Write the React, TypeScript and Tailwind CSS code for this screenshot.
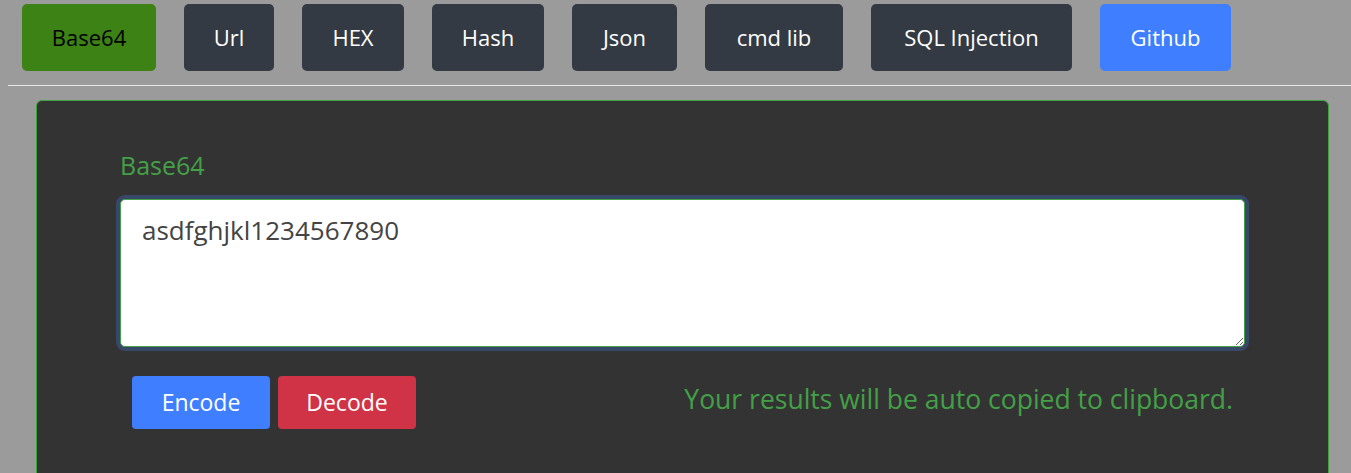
import React from "react";

const navItems = [
  { label: "Base64", w: "w-[134px]", cls: "bg-[#3d8215] text-black" },
  { label: "Url", w: "w-[90px]", cls: "bg-[#343a43] text-white" },
  { label: "HEX", w: "w-[102px]", cls: "bg-[#343a43] text-white" },
  { label: "Hash", w: "w-[112px]", cls: "bg-[#343a43] text-white" },
  { label: "Json", w: "w-[105px]", cls: "bg-[#343a43] text-white" },
  { label: "cmd lib", w: "w-[138px]", cls: "bg-[#343a43] text-white" },
  { label: "SQL Injection", w: "w-[201px]", cls: "bg-[#343a43] text-white" },
  { label: "Github", w: "w-[131px]", cls: "bg-[#3f7fff] text-white" },
];

const App = () => {
  return (
    <div
      className="h-[473px] w-full overflow-hidden bg-[#9b9b9b]"
      style={{ fontFamily: '"Open Sans", "Noto Sans", sans-serif' }}
    >
      <nav className="flex gap-[28px] pl-[22px] pt-[4px]">
        {navItems.map((item) => (
          <button
            key={item.label}
            className={`flex h-[67px] shrink-0 items-center justify-center rounded-[5px] text-[22px] ${item.w} ${item.cls}`}
          >
            {item.label}
          </button>
        ))}
      </nav>

      <hr className="ml-[8px] mt-[14px] border-t border-[#e6e6e6]" />

      <div className="ml-[36px] mr-[22px] mt-[14px] h-[400px] rounded-[6px] border border-[#3fa33f] bg-[#333333] px-[83px] pt-[46px]">
        <label className="block text-[25px] leading-[36px] text-[#43a047]">
          Base64
        </label>
        <textarea
          className="mt-[16px] block h-[148px] w-full resize-y rounded-[5px] border border-[#43a047] bg-white px-[21px] py-[12px] text-[26px] leading-[36px] text-[#444] shadow-[0_0_0_4px_#384869] outline-none"
          defaultValue="asdfghjkl1234567890"
        />
        <div className="mt-[29px] flex items-center justify-between pl-[12px] pr-[12px]">
          <div className="flex gap-[8px]">
            <button className="flex h-[53px] w-[138px] items-center justify-center rounded-[4px] bg-[#3f7fff] text-[23px] text-white">
              Encode
            </button>
            <button className="flex h-[53px] w-[138px] items-center justify-center rounded-[4px] bg-[#d03346] text-[23px] text-white">
              Decode
            </button>
          </div>
          <p className="mb-[6px] text-[26.5px] text-[#43a047]">
            Your results will be auto copied to clipboard.
          </p>
        </div>
      </div>
    </div>
  );
};

export default App;
